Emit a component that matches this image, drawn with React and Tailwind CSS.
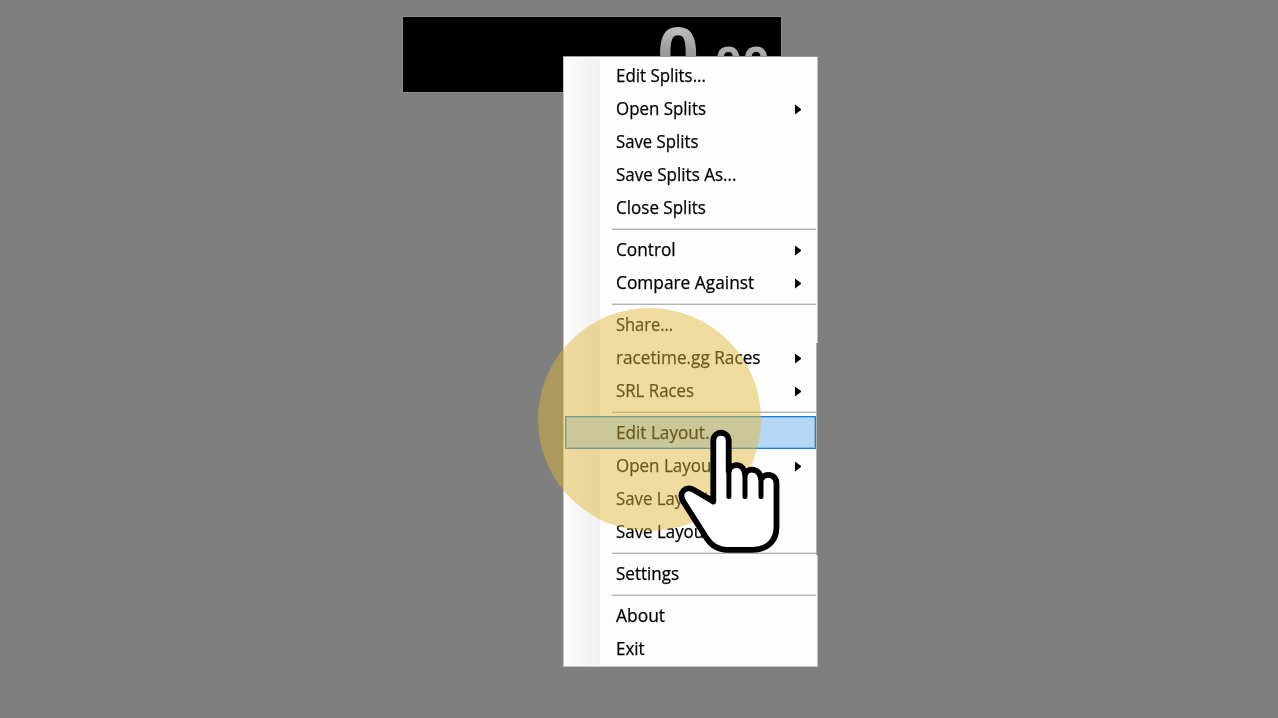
const groups = [
  [
    { label: 'Edit Splits...', fit: 'scale-x-[0.966]' },
    { label: 'Open Splits', fit: 'scale-x-[0.966]', sub: true },
    { label: 'Save Splits', fit: 'scale-x-[0.957]' },
    { label: 'Save Splits As...', fit: 'scale-x-[0.972]' },
    { label: 'Close Splits', fit: 'scale-x-[0.973]' },
  ],
  [
    { label: 'Control', fit: 'scale-x-[0.985]', sub: true },
    { label: 'Compare Against', fit: 'scale-x-[0.989]', sub: true },
  ],
  [
    { label: 'Share...', fit: 'scale-x-[0.94]' },
    { label: 'racetime.gg Races', fit: 'scale-x-[0.983]', sub: true },
    { label: 'SRL Races', fit: 'scale-x-[0.962]', sub: true },
  ],
  [
    { label: 'Edit Layout...', fit: 'scale-x-[0.98]', active: true },
    { label: 'Open Layout', fit: 'scale-x-[0.97]', sub: true },
    { label: 'Save Layout', fit: 'scale-x-[0.96]' },
    { label: 'Save Layout As...', fit: 'scale-x-[0.965]' },
  ],
  [{ label: 'Settings', fit: 'scale-x-[0.973]' }],
  [
    { label: 'About', fit: 'scale-x-[0.995]' },
    { label: 'Exit', fit: 'scale-x-[0.97]' },
  ],
];

function MenuItem({ label, fit, sub, active }) {
  return (
    <li
      className={`mr-px ml-px flex h-[33px] items-center justify-between pr-[15px] pl-[51px] ${
        active
          ? 'bg-[#b5d7f3] shadow-[inset_0_0_0_1px_#1380da,inset_0_0_0_2px_#7fb9e8]'
          : ''
      }`}
    >
      <span className={`mb-px origin-left whitespace-nowrap ${fit}`}>{label}</span>
      {sub && (
        <svg className="mt-px h-[11px] w-[6.5px] shrink-0" viewBox="0 0 6.5 11">
          <path d="M0 0.5 L6.5 5.5 L0 10.5 Z" fill="#000" />
        </svg>
      )}
    </li>
  );
}

function Separator() {
  return (
    <li className="h-[9px] pt-[5px] pr-px pl-[48px]">
      <div className="h-px bg-[#b4b4b4] shadow-[0_-1px_0_#e0e0e0]" />
    </li>
  );
}

function Timer() {
  return (
    <header className="flex h-[77px] w-[380px] items-start justify-end gap-[15px] overflow-hidden border border-[#8c8c8c] bg-black pr-[11px] font-['Liberation_Sans',sans-serif] font-bold">
      <span className="-mt-px bg-linear-to-b from-[#c4c4c4] from-10% to-[#707070] to-90% bg-clip-text text-[76px] leading-[76px] text-transparent">
        0
      </span>
      <span className="mt-[21px] bg-linear-to-b from-[#bcbcbc] to-[#777777] bg-clip-text text-[50px] leading-[54px] text-transparent">
        00
      </span>
    </header>
  );
}

function ContextMenu() {
  return (
    <nav className="absolute top-[57px] left-[563px] h-[610px] w-[255px] border-x border-b border-[#c4c4c4] bg-[#fdfdfd] pt-0.5 font-['Open_Sans','Noto_Sans',sans-serif] text-[17.5px] text-black shadow-[0_-1px_0_#999] [-webkit-text-stroke:0.25px_#000]">
      <div className="absolute top-[286px] -right-px h-[212px] w-0.5 border-l border-[#b0b0b0] bg-[#808080]" />
      <div className="bg-linear-to-r from-[#fcfcfc] to-[#f0f0f0] bg-[length:36px_100%] bg-no-repeat">
        {groups.map((items, i) => (
          <ul key={i}>
            {i > 0 && <Separator />}
            {items.map((item) => (
              <MenuItem key={item.label} {...item} />
            ))}
          </ul>
        ))}
      </div>
    </nav>
  );
}

function HandCursor() {
  return (
    <svg
      className="absolute top-[420px] left-[670px] h-[140px] w-[120px]"
      viewBox="0 0 120 140"
      stroke="#000"
      strokeWidth="5.8"
      strokeLinecap="round"
      strokeLinejoin="round"
    >
      <path
        fill="#fff"
        d="M43.3 81.5 V21 C43.3 10 58.7 10 58.7 21 V51 C61 42.5 74 43 75 54 C78 47 90 48.5 91 59 C95 52 106.5 54 106.5 64 V107 C106.5 121 97 129.8 83 129.8 H57 C47 129.8 41 125 36.5 118 L13.3 81.5 C8 72 16 65.5 24 70 Z"
      />
      <path fill="none" strokeWidth="5" d="M58.9 50 V76.5 M75 54 V76.5 M91 59 V76.5" />
    </svg>
  );
}

export default function App() {
  return (
    <main className="relative h-[718px] w-[1278px] overflow-hidden bg-[#7f7f7f] pt-4 pl-[402px]">
      <Timer />
      <ContextMenu />
      <div className="absolute top-[308px] left-[538px] size-[223px] rounded-full bg-[rgba(223,181,52,0.48)]" />
      <HandCursor />
    </main>
  );
}
